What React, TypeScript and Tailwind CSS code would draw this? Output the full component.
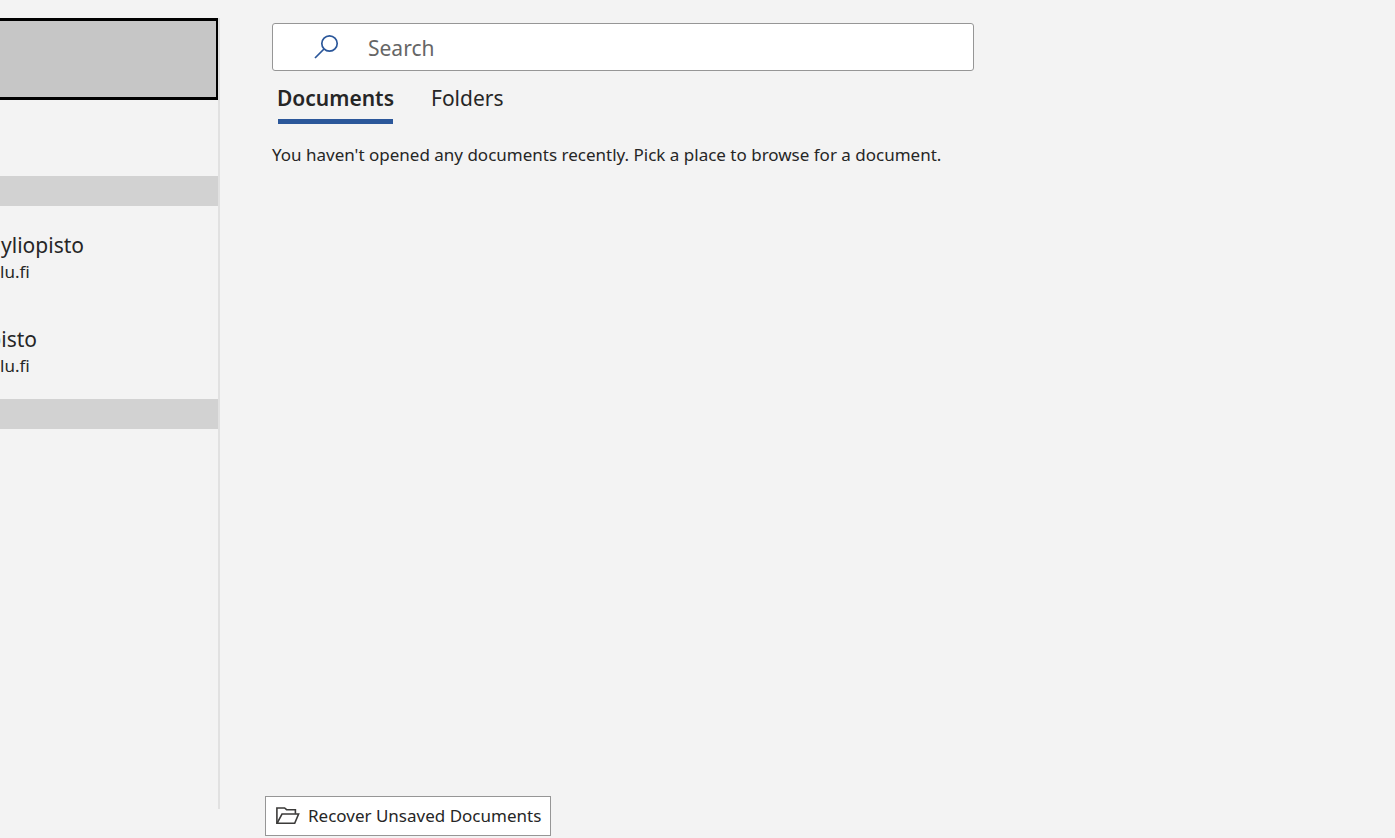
import React from 'react';

type Place = { name: string; host: string; nameWidth: string };

function SearchIcon() {
  return (
    <svg width="26" height="26" viewBox="0 0 26 26" fill="none" stroke="#2b579a" strokeWidth="1.7" aria-hidden="true">
      <circle cx="16.5" cy="9.5" r="7.7" />
      <path d="M11 15 2 24" />
    </svg>
  );
}

function FolderIcon() {
  return (
    <svg width="24" height="18" viewBox="0 0 24 18" fill="none" stroke="#3b3a39" strokeWidth="1.6" aria-hidden="true">
      <path d="M.9 16.2V1H8.6l2 1.7h8.8v4" />
      <path d="M1 16.3 6 7H22.6l-3.9 9.3Z" />
    </svg>
  );
}

function PlaceItem({ name, host, nameWidth }: Place) {
  return (
    <a href="#place" className="flex h-[94px] flex-col items-start pt-6">
      <span className={`flex h-[30px] justify-end overflow-hidden text-[21px] leading-[30px] whitespace-nowrap ${nameWidth}`}>{name}</span>
      <span className="text-[17px] leading-6 whitespace-nowrap">{host}</span>
    </a>
  );
}

export default function App() {
  return (
    <div className="flex min-h-screen bg-[#f3f3f3] font-['Noto_Sans','Open_Sans',sans-serif] text-[#262626]">
      <aside className="mt-[18px] mb-[29px] w-[220px] shrink-0 border-r-2 border-[#e1e1e1]">
        <button type="button" aria-label="Recent" className="block h-[82px] w-full border-y-[3px] border-r-2 border-black bg-[#c6c6c6]" />
        <div className="mt-[76px] h-[30px] bg-[#d2d2d2]" />
        <nav aria-label="Places" className="pb-[5px]">
          <PlaceItem name="yliopisto" host="lu.fi" nameWidth="w-[84px]" />
          <PlaceItem name="pisto" host="lu.fi" nameWidth="w-[37px]" />
        </nav>
        <div className="h-[30px] bg-[#d2d2d2]" />
      </aside>
      <main className="flex min-w-0 flex-1 flex-col items-start pt-[23px] pr-6 pb-[2px] pl-[45px]">
        <label className="ml-[7px] flex h-12 w-full max-w-[702px] items-center rounded-[3px] border border-[#969696] bg-white pl-10">
          <SearchIcon />
          <input
            type="search"
            aria-label="Search"
            placeholder="Search"
            className="ml-[29px] h-full min-w-0 flex-1 bg-transparent pt-[2px] text-[21px] outline-none placeholder:text-[#666666]"
          />
        </label>
        <div role="tablist" className="ml-[13px] flex h-[53px] gap-[38px] text-[21px] leading-[30px]">
          <button type="button" role="tab" aria-selected="true" className="flex h-full w-[115px] items-end justify-center border-b-[5px] border-[#2b579a] pb-[6px] font-semibold">
            Documents
          </button>
          <button type="button" role="tab" aria-selected="false" className="flex h-full items-end pb-[11px]">
            Folders
          </button>
        </div>
        <p className="mt-[19px] ml-[7px] text-[17px] leading-6">
          You haven't opened any documents recently. Pick a place to browse for a document.
        </p>
        <button type="button" className="mt-auto flex h-10 items-center gap-2 border border-[#969696] bg-white pr-[9px] pl-[10px] text-[17px] whitespace-nowrap">
          <FolderIcon />
          Recover Unsaved Documents
        </button>
      </main>
    </div>
  );
}
